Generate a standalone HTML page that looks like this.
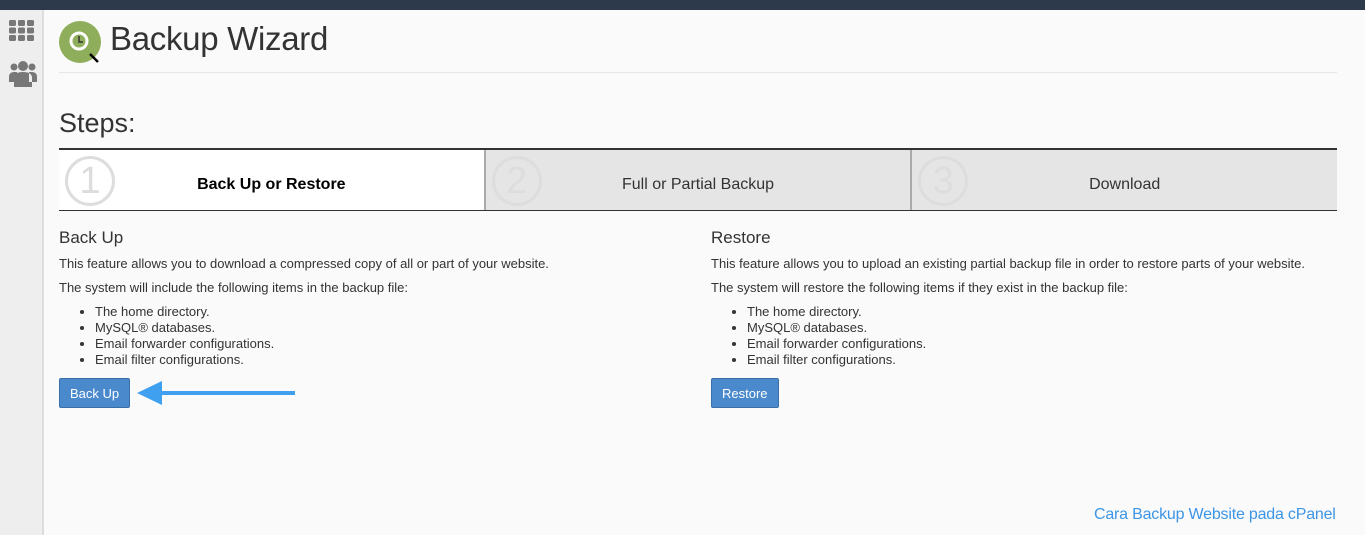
<!DOCTYPE html>
<html><head><style>
*{margin:0;padding:0;box-sizing:border-box}
body{width:1365px;height:535px;background:#fafafa;font-family:"Liberation Sans",sans-serif;color:#333;position:relative;overflow:hidden}
.top{position:absolute;left:0;top:0;width:1365px;height:10px;background:#2d3a4b}
.side{position:absolute;left:0;top:10px;width:44px;height:525px;background:#eeeeee;border-right:2px solid #ddd}
.abs{position:absolute}
h1{position:absolute;left:110px;top:20px;font-size:33px;font-weight:normal;color:#333;letter-spacing:-0.3px}
.hr{position:absolute;left:59px;top:72px;width:1278px;height:1px;background:#e6e6e6}
.steps{position:absolute;left:59px;top:148px;width:1278px;height:63px;border-top:2px solid #333;border-bottom:1px solid #333;display:flex}
.st{flex:1;position:relative;background:#e5e5e5;font-size:16px;text-align:center;line-height:70px;color:#333}
.st.a{background:#fff;font-weight:bold;color:#000}
.st+.st{border-left:2px solid #aaa}
.num{position:absolute;left:6px;top:6px;width:50px;height:50px;border:3px solid #ddd;border-radius:50%;color:#ddd;font-size:38px;line-height:44px;text-align:center;font-weight:normal}
.col{position:absolute;top:228px;font-size:13px}
.col h3{font-size:17px;font-weight:normal;margin-bottom:8px}
.col p{margin-bottom:9px}
.col ul{margin-left:36px;line-height:16px;margin-bottom:10px}
.btn{display:inline-block;background:#4a89cb;color:#fff;border:1px solid #3a70a8;border-radius:2px;padding:0 10px;height:30px;line-height:29px;font-size:13px}
</style></head><body>
<div class="top"></div>
<div class="side">
<svg class="abs" style="left:9px;top:10px" width="26" height="22"><g fill="#777"><rect x="0" y="0" width="7" height="6" rx="1.5"/><rect x="9" y="0" width="7" height="6" rx="1.5"/><rect x="18" y="0" width="7" height="6" rx="1.5"/><rect x="0" y="7.5" width="7" height="6" rx="1.5"/><rect x="9" y="7.5" width="7" height="6" rx="1.5"/><rect x="18" y="7.5" width="7" height="6" rx="1.5"/><rect x="0" y="15" width="7" height="6" rx="1.5"/><rect x="9" y="15" width="7" height="6" rx="1.5"/><rect x="18" y="15" width="7" height="6" rx="1.5"/></g></svg>
<svg class="abs" style="left:9px;top:50px" width="28" height="28"><g fill="#777"><circle cx="5" cy="7" r="3.5"/><circle cx="23" cy="7" r="3.5"/><circle cx="14" cy="6" r="5"/><path d="M0 22v-5q0-5 5-5h3v10z M28 22v-5q0-5-5-5h-3v10z M5 27v-9q0-6 9-6t9 6v9z"/></g></svg>
</div>
<svg class="abs" style="left:59px;top:21px" width="44" height="44"><circle cx="21" cy="21" r="21" fill="#8fae5c"/><circle cx="20" cy="20" r="8" fill="none" stroke="#fff" stroke-width="3"/><path d="M20 15v6h4" stroke="#333" stroke-width="1.5" fill="none"/><path d="M31 33l8 8" stroke="#000" stroke-width="2.5"/></svg>
<h1>Backup Wizard</h1>
<div class="hr"></div>
<div class="abs" style="left:59px;top:108px;font-size:27px;color:#333">Steps:</div>
<div class="steps">
<div class="st a"><span class="num">1</span>Back Up or Restore</div>
<div class="st"><span class="num">2</span>Full or Partial Backup</div>
<div class="st"><span class="num">3</span>Download</div>
</div>
<div class="col" style="left:59px">
<h3>Back Up</h3>
<p>This feature allows you to download a compressed copy of all or part of your website.</p>
<p>The system will include the following items in the backup file:</p>
<ul><li>The home directory.</li><li>MySQL® databases.</li><li>Email forwarder configurations.</li><li>Email filter configurations.</li></ul>
<span class="btn">Back Up</span>
</div>
<div class="col" style="left:711px">
<h3>Restore</h3>
<p>This feature allows you to upload an existing partial backup file in order to restore parts of your website.</p>
<p>The system will restore the following items if they exist in the backup file:</p>
<ul><li>The home directory.</li><li>MySQL® databases.</li><li>Email forwarder configurations.</li><li>Email filter configurations.</li></ul>
<span class="btn">Restore</span>
</div>
<svg class="abs" style="left:135px;top:380px" width="165" height="26"><path d="M2 13L27 1v24z" fill="#3fa0f0"/><rect x="25" y="11" width="135" height="4" fill="#3fa0f0"/></svg>
<div class="abs" style="left:1094px;top:506px;font-size:16px;color:#3c95e6;letter-spacing:-0.2px">Cara Backup Website pada cPanel</div>
</body></html>
